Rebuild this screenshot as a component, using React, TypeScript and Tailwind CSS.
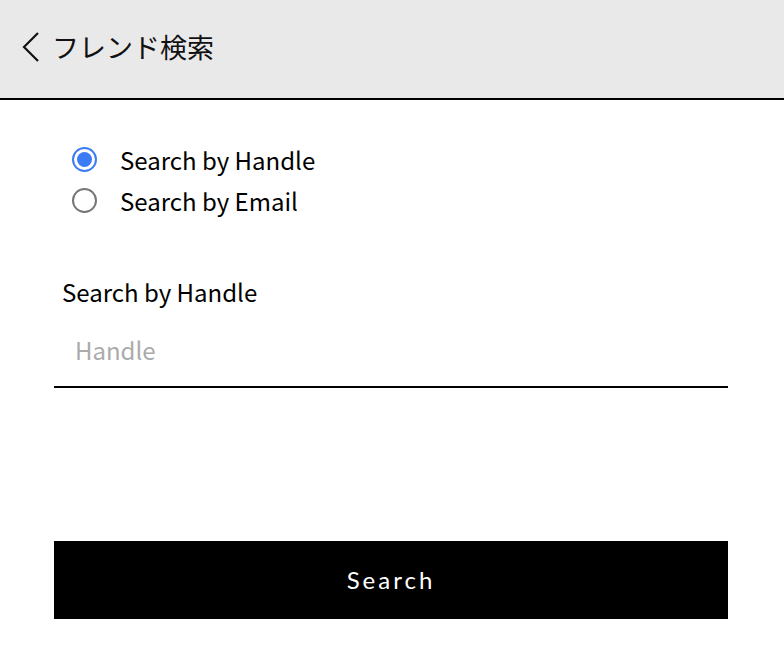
import { useState } from "react"

const font = { fontFamily: '"Noto Sans CJK JP", "Noto Sans", sans-serif' }

function Radio({ checked, label, onClick }: { checked: boolean; label: string; onClick: () => void }) {
  return (
    <button type="button" onClick={onClick} className="flex h-[41px] items-center text-left">
      <span
        className={`ml-[72px] flex size-[25px] items-center justify-center rounded-full border-2 ${
          checked ? "border-[#3b7cf4]" : "border-[#767676]"
        }`}
      >
        {checked && <span className="size-[15px] rounded-full bg-[#3b7cf4]" />}
      </span>
      <span className="ml-[23px] text-[24px] text-black">{label}</span>
    </button>
  )
}

export default function App() {
  const [mode, setMode] = useState<"handle" | "email">("handle")
  const [value, setValue] = useState("")
  const label = mode === "handle" ? "Search by Handle" : "Search by Email"

  return (
    <div className="flex h-[658px] w-[784px] flex-col bg-white" style={font}>
      <header className="flex h-[100px] items-center border-b-2 border-black bg-[#e9e9e9] pb-[4px]">
        <svg className="ml-[20px]" width="22" height="32" viewBox="0 0 22 32" fill="none">
          <path d="M18 2 L4 16 L18 30" stroke="#111" strokeWidth="2.2" strokeLinejoin="miter" />
        </svg>
        <h1 className="ml-[10px] text-[27px] font-normal text-[#111]">フレンド検索</h1>
      </header>

      <div className="mt-[39px] flex flex-col">
        <Radio checked={mode === "handle"} label="Search by Handle" onClick={() => setMode("handle")} />
        <Radio checked={mode === "email"} label="Search by Email" onClick={() => setMode("email")} />
      </div>

      <div className="ml-[54px] mt-[53px] flex w-[674px] flex-col">
        <label className="ml-[8px] text-[24px] text-black">{label}</label>
        <input
          value={value}
          onChange={(e) => setValue(e.target.value)}
          placeholder={mode === "handle" ? "Handle" : "Email"}
          className="mt-[20px] h-[58px] border-b-2 border-black px-[21px] pb-[18px] text-[24px] text-black outline-none placeholder:text-[#ababab]"
        />
      </div>

      <button
        type="button"
        className="ml-[54px] mt-[153px] h-[78px] w-[674px] bg-black text-[24px] font-normal tracking-[3px] text-white"
        style={{ fontFamily: '"Lato", "Noto Sans", sans-serif' }}
      >
        Search
      </button>
    </div>
  )
}
